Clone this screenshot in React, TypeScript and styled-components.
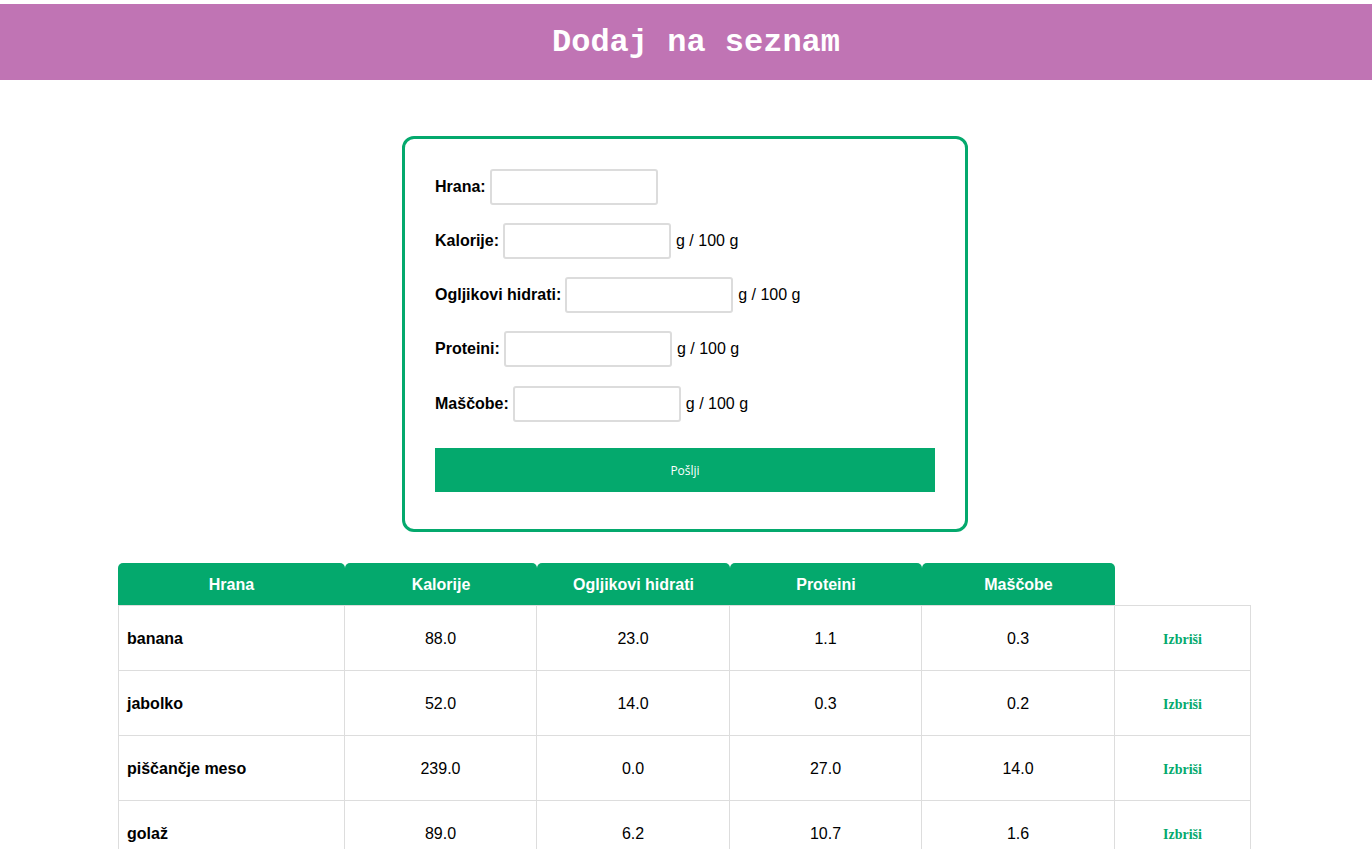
import React from "react";
import styled, { createGlobalStyle } from "styled-components";

const GREEN = "#04a96d";

const Global = createGlobalStyle`
  html, body { margin: 0; padding: 0; background: #fff; }
  body { font-family: "Liberation Sans", Arial, sans-serif; color: #000; }
`;

const Page = styled.div`
  padding-top: 4px;
`;

const Header = styled.header`
  height: 76px;
  background: #c074b4;
  display: flex;
  align-items: center;
  justify-content: center;
`;

const Title = styled.h1`
  margin: 0;
  font-family: "Liberation Mono", "Courier New", monospace;
  font-weight: bold;
  font-size: 32px;
  color: #fff;
  transform: translateX(10px);
`;

const Main = styled.main`
  padding-right: 4px;
  display: flex;
  flex-direction: column;
  align-items: center;
`;

const Card = styled.form`
  margin-top: 56px;
  margin-left: 2px;
  width: 500px;
  padding: 30px 30px 37px;
  border: 3px solid ${GREEN};
  border-radius: 12px;
`;

const Row = styled.div`
  display: flex;
  align-items: center;
  height: 35px;
  margin-bottom: 19.3px;
  font-size: 16px;
`;

const Label = styled.label`
  font-weight: bold;
  margin-right: 4px;
`;

const Input = styled.input`
  box-sizing: border-box;
  width: 168px;
  height: 36px;
  border: 2px solid #dcdcdc;
  border-radius: 3px;
  margin-right: 5px;
  outline: none;
`;

const Unit = styled.span`
  font-size: 16px;
`;

const Submit = styled.button`
  display: block;
  width: 500px;
  height: 44px;
  margin-top: 27px;
  border: none;
  background: ${GREEN};
  color: #fff;
  font-family: "Open Sans", "Noto Sans", sans-serif;
  font-size: 12px;
`;

const Table = styled.table`
  margin-top: 31px;
  margin-left: 1px;
  width: 1133px;
  table-layout: fixed;
  border-collapse: separate;
  border-spacing: 0;
  font-size: 16px;
`;

const Th = styled.th<{ $empty?: boolean }>`
  height: 40px;
  padding: 2px 0 0;
  background: ${(p) => (p.$empty ? "transparent" : GREEN)};
  color: #fff;
  font-weight: bold;
  text-align: center;
  border-radius: 5px 5px 0 0;
  border-bottom: 1px solid #ddd;
`;

const Td = styled.td<{ $name?: boolean }>`
  height: 62px;
  padding: 2px 0 0 ${(p) => (p.$name ? "8px" : "0")};
  text-align: ${(p) => (p.$name ? "left" : "center")};
  font-weight: ${(p) => (p.$name ? "bold" : "normal")};
  border-right: 1px solid #ddd;
  border-bottom: 1px solid #ddd;
  &:first-child { border-left: 1px solid #ddd; }
`;

const Delete = styled.button`
  border: none;
  background: none;
  padding: 0;
  color: ${GREEN};
  font-family: "Liberation Serif", "Times New Roman", serif;
  font-weight: bold;
  font-size: 14px;
  cursor: pointer;
`;

const fields = [
  { label: "Hrana:", unit: false },
  { label: "Kalorije:", unit: true },
  { label: "Ogljikovi hidrati:", unit: true },
  { label: "Proteini:", unit: true },
  { label: "Maščobe:", unit: true },
];

const rows = [
  ["banana", "88.0", "23.0", "1.1", "0.3"],
  ["jabolko", "52.0", "14.0", "0.3", "0.2"],
  ["piščančje meso", "239.0", "0.0", "27.0", "14.0"],
  ["golaž", "89.0", "6.2", "10.7", "1.6"],
];

const widths = [227, 192, 193, 192, 193, 136];

export default function App() {
  return (
    <Page>
      <Global />
      <Header>
        <Title>Dodaj na seznam</Title>
      </Header>
      <Main>
        <Card onSubmit={(e) => e.preventDefault()}>
          {fields.map((f) => (
            <Row key={f.label}>
              <Label>{f.label}</Label>
              <Input type="text" />
              {f.unit && <Unit>g / 100 g</Unit>}
            </Row>
          ))}
          <Submit type="submit">Pošlji</Submit>
        </Card>
        <Table>
          <colgroup>
            {widths.map((w, i) => (
              <col key={i} style={{ width: w }} />
            ))}
          </colgroup>
          <thead>
            <tr>
              <Th>Hrana</Th>
              <Th>Kalorije</Th>
              <Th>Ogljikovi hidrati</Th>
              <Th>Proteini</Th>
              <Th>Maščobe</Th>
              <Th $empty />
            </tr>
          </thead>
          <tbody>
            {rows.map((r) => (
              <tr key={r[0]}>
                <Td $name>{r[0]}</Td>
                {r.slice(1).map((v, i) => (
                  <Td key={i}>{v}</Td>
                ))}
                <Td>
                  <Delete type="button">Izbriši</Delete>
                </Td>
              </tr>
            ))}
          </tbody>
        </Table>
      </Main>
    </Page>
  );
}
